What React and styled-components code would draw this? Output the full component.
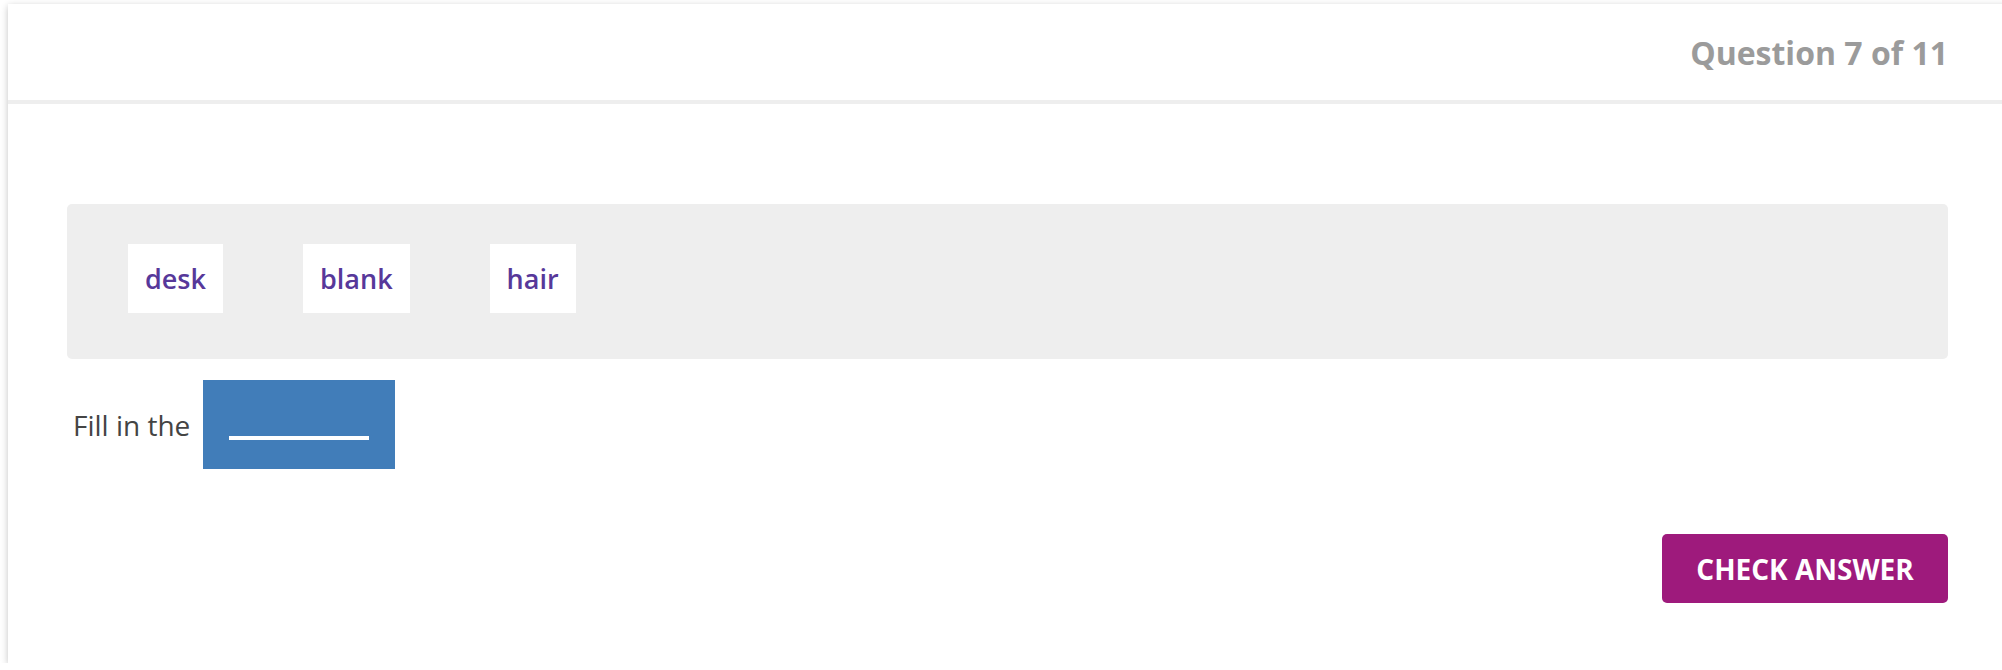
import React from 'react';
import styled, { createGlobalStyle } from 'styled-components';

const GlobalStyle = createGlobalStyle`
  html, body {
    margin: 0;
    padding: 0;
    overflow: hidden;
    background: #fff;
  }
  body {
    padding: 4px 0 0 8px;
    font-family: "Open Sans", "Noto Sans", sans-serif;
  }
`;

const Card = styled.div`
  width: 2000px;
  height: 659px;
  background: #fff;
  box-shadow: 0 2px 7px rgba(0, 0, 0, 0.24);
  display: flex;
  flex-direction: column;
`;

const Header = styled.div`
  height: 96px;
  border-bottom: 4px solid #eee;
  display: flex;
  align-items: center;
  justify-content: flex-end;
  padding-right: 60px;
`;

const Counter = styled.div`
  font-size: 32px;
  font-weight: 700;
  color: #9b9b9b;
`;

const Body = styled.div`
  padding: 100px 60px 0 59px;
  display: flex;
  flex-direction: column;
`;

const WordBank = styled.div`
  background: #eee;
  border-radius: 5px;
  height: 155px;
  box-sizing: border-box;
  padding: 40px 61px;
  display: flex;
  align-items: flex-start;
  gap: 80px;
`;

const Word = styled.div`
  background: #fff;
  height: 69px;
  padding: 0 17px;
  display: flex;
  align-items: center;
  font-size: 27px;
  font-weight: 600;
  color: #57389a;
`;

const Sentence = styled.div`
  margin-top: 21px;
  display: flex;
  align-items: center;
  gap: 13px;
  padding-left: 6px;
`;

const Text = styled.span`
  font-size: 28px;
  color: #444;
`;

const Blank = styled.div`
  width: 192px;
  height: 89px;
  box-sizing: border-box;
  background: #417db9;
  padding: 56px 26px 0;
`;

const BlankLine = styled.div`
  height: 4px;
  background: #fff;
`;

const Footer = styled.div`
  margin-top: 65px;
  display: flex;
  justify-content: flex-end;
`;

const CheckButton = styled.button`
  width: 286px;
  height: 69px;
  border: none;
  border-radius: 5px;
  background: #9e1a7c;
  color: #fff;
  font-family: "Open Sans", "Noto Sans", sans-serif;
  font-size: 28px;
  font-weight: 700;
  text-transform: uppercase;
  cursor: pointer;
`;

const words = ['desk', 'blank', 'hair'];

const App = () => {
  return (
    <>
      <GlobalStyle />
      <Card>
        <Header>
          <Counter>Question 7 of 11</Counter>
        </Header>
        <Body>
          <WordBank>
            {words.map((w) => (
              <Word key={w}>{w}</Word>
            ))}
          </WordBank>
          <Sentence>
            <Text>Fill in the</Text>
            <Blank>
              <BlankLine />
            </Blank>
          </Sentence>
          <Footer>
            <CheckButton>Check Answer</CheckButton>
          </Footer>
        </Body>
      </Card>
    </>
  );
};

export default App;
